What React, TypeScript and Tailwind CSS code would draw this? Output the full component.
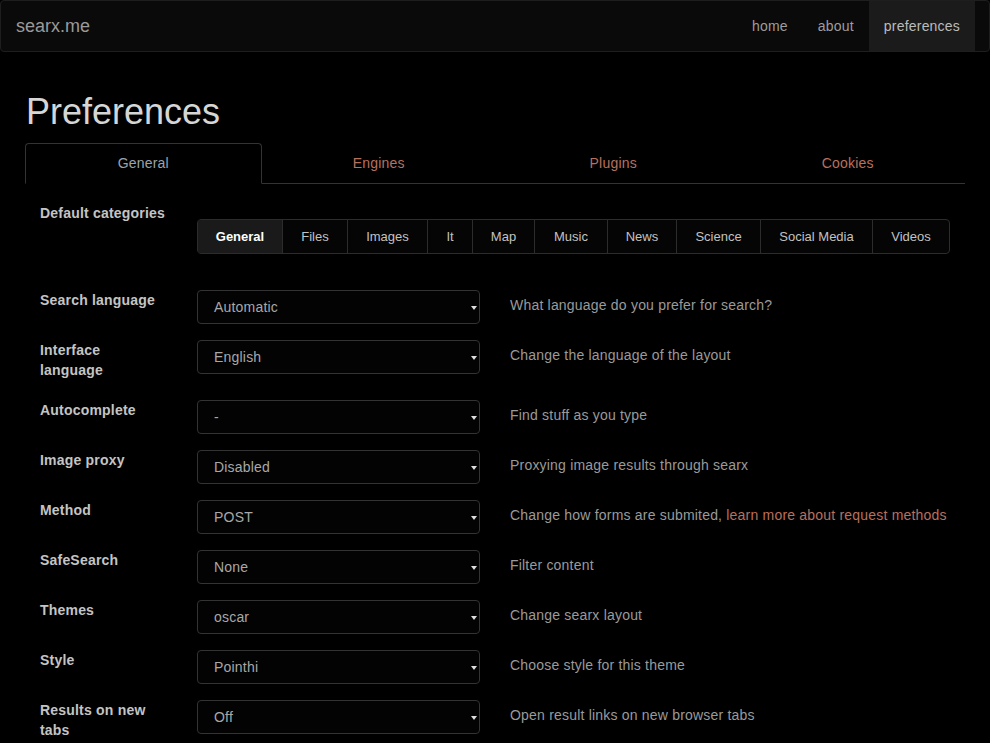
const categories = [
  { name: 'General', w: 'w-[84px]', active: true },
  { name: 'Files', w: 'w-[65px]' },
  { name: 'Images', w: 'w-[80px]' },
  { name: 'It', w: 'w-[45px]' },
  { name: 'Map', w: 'w-[62px]' },
  { name: 'Music', w: 'w-[73px]' },
  { name: 'News', w: 'w-[69px]' },
  { name: 'Science', w: 'w-[84px]' },
  { name: 'Social Media', w: 'w-[112px]' },
  { name: 'Videos', w: 'w-[77px]' },
];

type Setting = {
  label: string;
  value: string;
  help: React.ReactNode;
};

const settings: Setting[] = [
  { label: 'Search language', value: 'Automatic', help: 'What language do you prefer for search?' },
  { label: 'Interface language', value: 'English', help: 'Change the language of the layout' },
  { label: 'Autocomplete', value: '-', help: 'Find stuff as you type' },
  { label: 'Image proxy', value: 'Disabled', help: 'Proxying image results through searx' },
  {
    label: 'Method',
    value: 'POST',
    help: (
      <>
        Change how forms are submited,{' '}
        <a href="#" className="text-[#b8705e]">
          learn more about request methods
        </a>
      </>
    ),
  },
  { label: 'SafeSearch', value: 'None', help: 'Filter content' },
  { label: 'Themes', value: 'oscar', help: 'Change searx layout' },
  { label: 'Style', value: 'Pointhi', help: 'Choose style for this theme' },
  { label: 'Results on new tabs', value: 'Off', help: 'Open result links on new browser tabs' },
];

const tabs = ['General', 'Engines', 'Plugins', 'Cookies'];

const Select = ({ value }: { value: string }) => (
  <div className="w-[283px] h-[34px] shrink-0 flex items-center justify-between bg-[#030303] border border-[#333] rounded pl-4 pr-[2px] text-[14px] text-[#a8a8a8]">
    <span>{value}</span>
    <svg width="6" height="4" viewBox="0 0 6 4" className="mt-[1px]">
      <path d="M0 0h6L3 4z" fill="#ddd" />
    </svg>
  </div>
);

export default function App() {
  return (
    <div
      className="min-h-[743px] bg-black text-[#aaa] tracking-[0.2px]"
      style={{ fontFamily: '"Liberation Sans", Arial, sans-serif' }}
    >
      <nav className="h-[52px] border border-[#1e1e1e] rounded bg-[#0a0a0a] flex items-stretch justify-between">
        <div className="pl-[15px] flex items-center text-[18px] text-[#9a9a9a] tracking-normal">searx.me</div>
        <ul className="flex pr-[14px] text-[14px] text-[#9d9d9d]">
          <li className="px-[15px] flex items-center">home</li>
          <li className="px-[15px] flex items-center">about</li>
          <li className="px-[15px] flex items-center bg-[#1b1b1b] text-[#bbb]">preferences</li>
        </ul>
      </nav>

      <div className="w-[940px] ml-[25px]">
        <h1 className="mt-[40px] mb-[11px] text-[36px] leading-[40px] text-[#d6d6d6] pl-px tracking-normal">
          Preferences
        </h1>

        <div className="flex border-b border-[#333] h-[41px]">
          {tabs.map((t, i) => (
            <div
              key={t}
              className={
                i === 0
                  ? 'flex-1 flex items-center justify-center text-[14px] text-[#9aa4ae] border border-[#333] border-b-black rounded-t -mb-px bg-black'
                  : 'flex-1 flex items-center justify-center text-[14px] text-[#b8705e]'
              }
            >
              {t}
            </div>
          ))}
        </div>

        <div className="pt-[19px] px-[15px]">
          <div className="flex mb-[36px]">
            <div className="w-[157px] shrink-0 text-[14px] leading-5 font-bold text-[#c4c4c4]">Default categories</div>
            <div className="mt-[16px] flex h-[35px] border border-[#2c2c2c] rounded-sm bg-[#050505] tracking-normal">
              {categories.map((c, i) => (
                <div
                  key={c.name}
                  className={`${c.w} flex items-center justify-center text-[13px] ${
                    i > 0 ? 'border-l border-[#2c2c2c]' : ''
                  } ${c.active ? 'bg-[#1a1a1a] text-white font-bold' : 'text-[#c2c2c2]'}`}
                >
                  {c.name}
                </div>
              ))}
            </div>
          </div>

          {settings.map((s) => (
            <div key={s.label} className="flex items-start mb-[16px]">
              <div className="w-[157px] shrink-0 pr-[36px] text-[14px] leading-5 font-bold text-[#c4c4c4] mb-[4px]">
                {s.label}
              </div>
              <Select value={s.value} />
              <div className="ml-[30px] h-[30px] flex items-center text-[14px] text-[#9a9a9a] whitespace-nowrap">
                <span>{s.help}</span>
              </div>
            </div>
          ))}
        </div>
      </div>
    </div>
  );
}
